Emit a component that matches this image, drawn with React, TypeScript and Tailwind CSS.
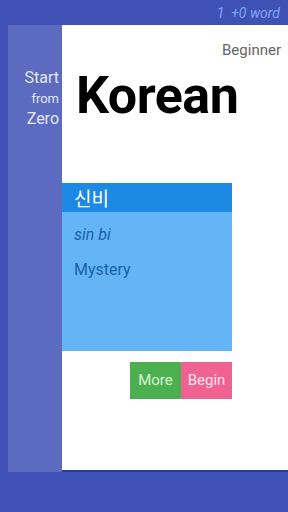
import React from "react";

export default function App() {
  return (
    <div className="w-[288px] h-[512px] bg-[#3F51B5] flex flex-col overflow-hidden" style={{ fontFamily: "Roboto, 'Noto Sans CJK KR', sans-serif" }}>
      <div className="h-[25px] flex items-center justify-end pr-[8px] pt-[1px]">
        <span className="italic text-[14px] text-[#7FA6F5] leading-none whitespace-pre">1  +0 word</span>
      </div>
      <div className="h-[447px] flex ml-[8px]">
        <div className="w-[54px] bg-[#5C6BBF] flex flex-col items-end pr-[3px] pt-[43px] text-[#E3E6F5] leading-none">
          <span className="text-[16px] leading-[20px]">Start</span>
          <span className="text-[13px] leading-[20px] mt-[1px]">from</span>
          <span className="text-[16px] leading-[20px]">Zero</span>
        </div>
        <div className="flex-1 bg-white border-b-[2px] border-[#2A3A9E] flex flex-col">
          <div className="flex justify-end pr-[7px] pt-[15px]">
            <span className="text-[15px] text-[#666666] leading-[20px]">Beginner</span>
          </div>
          <div className="pl-[14px] mt-[6px]">
            <span className="text-[52px] font-bold text-black leading-[60px] tracking-[-0.5px]">Korean</span>
          </div>
          <div className="mt-[57px] w-[170px] h-[168px] bg-[#64B5F6] flex flex-col">
            <div className="h-[29px] bg-[#1E88E5] flex items-center pl-[12px]">
              <span className="text-[19px] text-white leading-none" style={{ fontFamily: "'Noto Sans CJK KR', sans-serif" }}>신비</span>
            </div>
            <div className="pl-[12px] pt-[13px] text-[#1B5FAE]">
              <div className="italic text-[16px] leading-[20px]">sin bi</div>
              <div className="text-[16px] leading-[20px] mt-[15px]">Mystery</div>
            </div>
          </div>
          <div className="w-[170px] flex justify-end mt-[11px]">
            <div className="w-[51px] h-[37px] bg-[#4CAF50] flex items-center justify-center text-[15px] text-[#D9F7D6]">More</div>
            <div className="w-[51px] h-[37px] bg-[#F06292] flex items-center justify-center text-[15px] text-[#FCE4EC]">Begin</div>
          </div>
        </div>
      </div>
    </div>
  );
}
